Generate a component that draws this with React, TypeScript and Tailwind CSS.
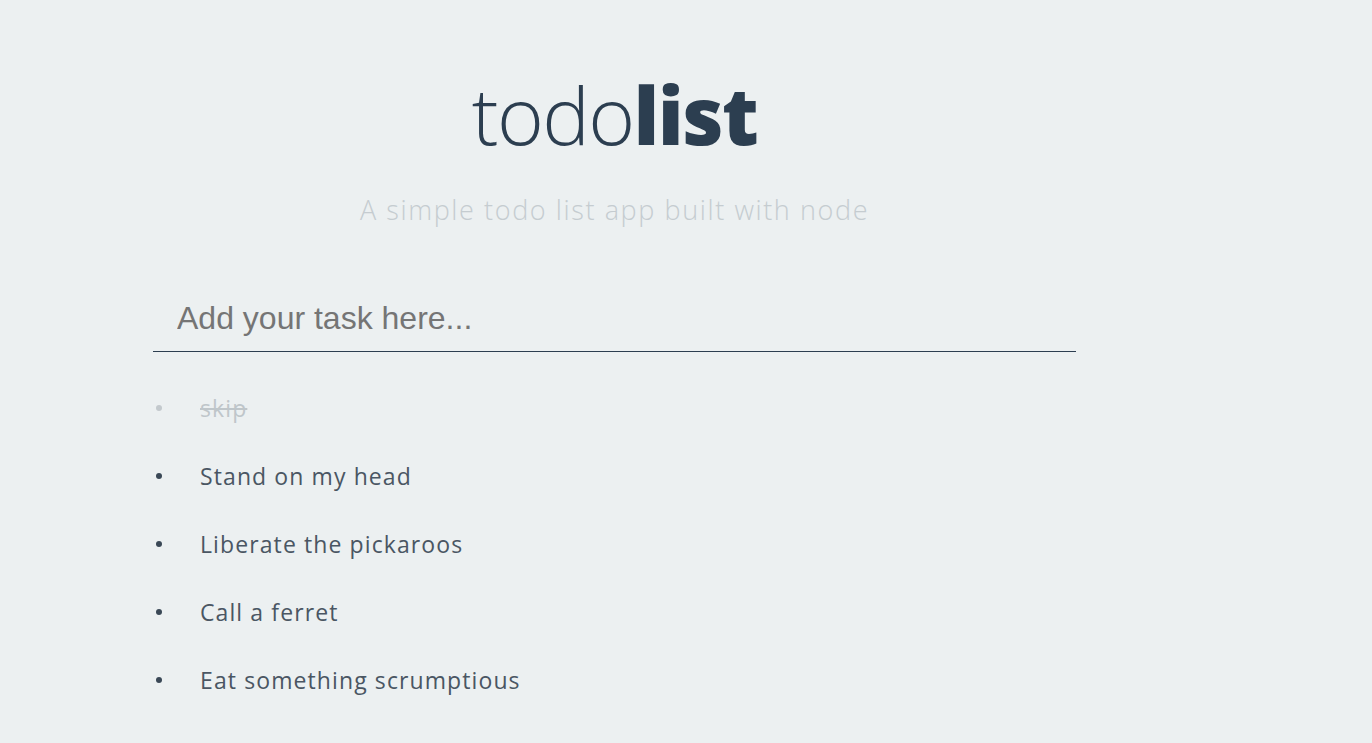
const tasks = [
  { text: "skip", done: true },
  { text: "Stand on my head", done: false },
  { text: "Liberate the pickaroos", done: false },
  { text: "Call a ferret", done: false },
  { text: "Eat something scrumptious", done: false },
];

export default function App() {
  return (
    <div className="min-h-screen bg-[#ecf0f1] font-['Open_Sans',sans-serif]">
      <div className="ml-[153px] w-[923px] pt-[69px]">
        <h1 className="text-center text-[80px] leading-[90px] text-[#2c3e50] tracking-[-1.6px]">
          <span className="font-light">todo</span>
          <span className="font-extrabold">list</span>
        </h1>
        <p className="mt-[35px] text-center text-[27px] leading-[32px] font-light tracking-[1.6px] text-[#c5ccd0]">
          A simple todo list app built with node
        </p>
        <div className="mt-[67px] border-b border-[#2c3e50]">
          <input
            type="text"
            autoFocus
            placeholder="Add your task here..."
            className="w-full h-[58px] bg-transparent pl-[24px] pb-[8px] text-[32px] font-['Liberation_Sans',sans-serif] text-[#333] caret-[#333] placeholder:text-[#757575] outline-none"
          />
        </div>
        <ul className="mt-[22px]">
          {tasks.map((t) => (
            <li key={t.text} className="flex items-center h-[68px]">
              <span
                className={
                  "ml-[3px] w-[6px] h-[6px] rounded-full " +
                  (t.done ? "bg-[#c3c9cd]" : "bg-[#3a4856]")
                }
              />
              <span
                className={
                  "ml-[38px] text-[23px] tracking-[1.1px] " +
                  (t.done ? "text-[#bfc6ca] line-through" : "text-[#4a5663]")
                }
              >
                {t.text}
              </span>
            </li>
          ))}
        </ul>
      </div>
    </div>
  );
}
